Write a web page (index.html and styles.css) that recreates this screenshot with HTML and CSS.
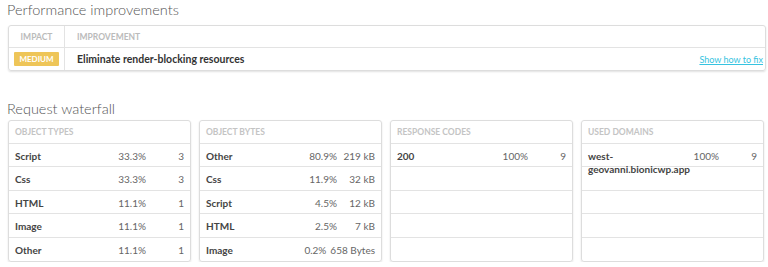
FILE: index.html
```html
<!DOCTYPE html>
<html lang="en">
<head>
    <meta charset="UTF-8">
    <meta name="viewport" content="width=device-width, initial-scale=1.0">
    <title>Performance report</title>
    <link rel="stylesheet" href="styles.css">
</head>
<body>
    <h2 class="section-title">Performance improvements</h2>
    <table class="improvements">
        <thead>
            <tr>
                <th class="impact-col">IMPACT</th>
                <th>IMPROVEMENT</th>
                <th></th>
            </tr>
        </thead>
        <tbody>
            <tr>
                <td class="impact-col"><span class="badge">MEDIUM</span></td>
                <td class="improvement-name">Eliminate render-blocking resources</td>
                <td class="fix-link"><a href="#">Show how to fix</a></td>
            </tr>
        </tbody>
    </table>

    <h2 class="section-title waterfall-title">Request waterfall</h2>
    <div class="cards">
        <div class="card">
            <div class="card-header">OBJECT TYPES</div>
            <div class="row"><span class="name">Script</span><span class="pct">33.3%</span><span class="val">3</span></div>
            <div class="row"><span class="name">Css</span><span class="pct">33.3%</span><span class="val">3</span></div>
            <div class="row"><span class="name">HTML</span><span class="pct">11.1%</span><span class="val">1</span></div>
            <div class="row"><span class="name">Image</span><span class="pct">11.1%</span><span class="val">1</span></div>
            <div class="row"><span class="name">Other</span><span class="pct">11.1%</span><span class="val">1</span></div>
        </div>
        <div class="card">
            <div class="card-header">OBJECT BYTES</div>
            <div class="row"><span class="name">Other</span><span class="pct">80.9%</span><span class="val">219 kB</span></div>
            <div class="row"><span class="name">Css</span><span class="pct">11.9%</span><span class="val">32 kB</span></div>
            <div class="row"><span class="name">Script</span><span class="pct">4.5%</span><span class="val">12 kB</span></div>
            <div class="row"><span class="name">HTML</span><span class="pct">2.5%</span><span class="val">7 kB</span></div>
            <div class="row"><span class="name">Image</span><span class="pct">0.2%</span><span class="val">658 Bytes</span></div>
        </div>
        <div class="card">
            <div class="card-header">RESPONSE CODES</div>
            <div class="row"><span class="name">200</span><span class="pct">100%</span><span class="val">9</span></div>
            <div class="row"></div>
            <div class="row"></div>
            <div class="row"></div>
            <div class="row"></div>
        </div>
        <div class="card">
            <div class="card-header">USED DOMAINS</div>
            <div class="row"><span class="name">west-geovanni.bionicwp.app</span><span class="pct">100%</span><span class="val">9</span></div>
            <div class="row"></div>
            <div class="row"></div>
            <div class="row"></div>
            <div class="row"></div>
        </div>
    </div>
</body>
</html>
```

FILE: styles.css
```css
body {
    font-family: Lato, sans-serif;
    font-size: 10px;
    margin: 0;
    padding: 0 2px 0 8px;
    background-color: #fff;
    color: #333;
}
.section-title {
    font-size: 14.5px;
    font-weight: 300;
    color: #555;
    margin: 0 0 0 -1px;
    line-height: 20px;
    height: 25px;
}
.waterfall-title {
    margin-top: 27px;
    height: 22px;
    line-height: 21px;
}
.improvements {
    width: 758px;
    border-collapse: separate;
    border-spacing: 0;
    border: 1px solid #ddd;
    border-radius: 3px;
    box-shadow: 0 1px 2px rgba(0,0,0,0.12);
}
.improvements th {
    text-align: left;
    font-weight: bold;
    font-size: 8.5px;
    color: #bbb;
    height: 21px;
    padding: 0 0 0 12px;
    border-bottom: 1px solid #e3e3e3;
}
.improvements th.impact-col {
    text-align: center;
    padding: 0;
}
.impact-col {
    box-sizing: border-box;
    width: 56px;
    border-right: 1px solid #e3e3e3;
}
.improvements td {
    height: 22px;
    padding: 0 0 0 12px;
}
.improvements td.impact-col {
    padding: 0 0 0 5px;
}
.badge {
    display: inline-block;
    width: 45px;
    height: 14px;
    line-height: 14px;
    text-align: center;
    font-size: 8px;
    font-weight: bold;
    color: #fff;
    background-color: #eec558;
    border-radius: 1px;
}
.improvement-name {
    font-weight: bold;
    font-size: 10.5px;
}
.fix-link {
    text-align: right;
    padding-right: 2px !important;
}
.fix-link a {
    color: #36c3e0;
    font-size: 9px;
}
.cards {
    display: flex;
    gap: 8px;
}
.card {
    width: 181px;
    border: 1px solid #ddd;
    border-radius: 3px;
    box-shadow: 0 1px 2px rgba(0,0,0,0.12);
}
.card-header {
    height: 22px;
    line-height: 22px;
    padding: 0 6px;
    font-size: 8.5px;
    font-weight: bold;
    color: #c4c4c4;
    border-bottom: 1px solid #e3e3e3;
}
.row {
    display: flex;
    box-sizing: border-box;
    height: 23.4px;
    padding: 6px 6px 0;
    line-height: 13px;
    border-bottom: 1px solid #e3e3e3;
}
.row:last-child {
    border-bottom: none;
}
.name {
    flex: 1;
    font-weight: bold;
    color: #444;
    min-width: 0;
}
.pct {
    width: 32px;
    text-align: right;
    color: #666;
}
.val {
    box-sizing: border-box;
    min-width: 38px;
    padding-left: 4px;
    white-space: nowrap;
    text-align: right;
    color: #666;
}
```
